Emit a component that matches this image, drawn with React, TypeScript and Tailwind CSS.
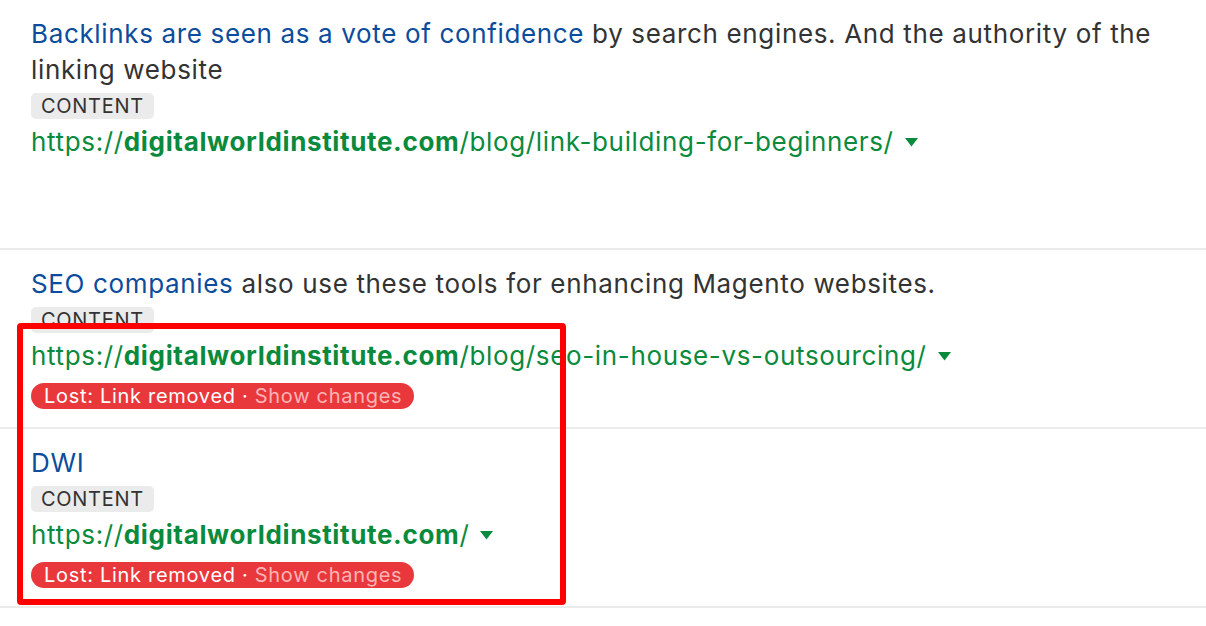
import React from 'react'

interface Backlink {
  anchor: string
  rest?: string
  path: string
  lost?: boolean
}

const rows: Backlink[] = [
  {
    anchor: 'Backlinks are seen as a vote of confidence',
    rest: ' by search engines. And the authority of the linking website',
    path: 'blog/link-building-for-beginners/',
  },
  {
    anchor: 'SEO companies',
    rest: ' also use these tools for enhancing Magento websites.',
    path: 'blog/seo-in-house-vs-outsourcing/',
    lost: true,
  },
  {
    anchor: 'DWI',
    path: '',
    lost: true,
  },
]

function Caret() {
  return (
    <svg width="15" height="10" viewBox="0 0 15 10" className="ml-[10px] inline-block align-middle">
      <path d="M1 1 L14 1 L7.5 9.5 Z" fill="#0a8a3d" />
    </svg>
  )
}

function Row({ item, first }: { item: Backlink; first?: boolean }) {
  return (
    <div
      className={
        'border-b-2 border-[#ebebeb] pl-[31px] pr-6 pt-4 pb-[13px] ' + (first ? 'h-[250px]' : '')
      }
    >
      <p className="text-[26px] leading-9 tracking-[0.65px] text-[#333333] max-w-[1150px]">
        <span className="text-[#0b4c9c]">{item.anchor}</span>
        {item.rest}
      </p>
      <div className="h-9 flex items-center">
        <span className="rounded-[5px] bg-[#ebebeb] px-[10px] text-[20px] leading-[26px] tracking-[0.7px] text-[#333333]">
          CONTENT
        </span>
      </div>
      <div className="h-9 flex items-center text-[26px] leading-9 tracking-[0.65px] text-[#0a8a3d]">
        <span>
          https://<span className="font-bold">digitalworldinstitute.com</span>/{item.path}
        </span>
        <Caret />
      </div>
      {item.lost && (
        <div className="mt-1 h-9 flex items-center">
          <span className="rounded-full bg-[#e8383c] pl-[13px] pr-3 text-[20px] leading-[26px] tracking-[0.7px] text-white">
            Lost: Link removed · <span className="text-[#ffb4b4]">Show changes</span>
          </span>
        </div>
      )}
    </div>
  )
}

export default function App() {
  return (
    <div
      className="relative w-[1206px] h-[626px] overflow-hidden bg-white"
      style={{ fontFamily: 'Inter, "Noto Sans", sans-serif' }}
    >
      {rows.map((r, i) => (
        <Row key={i} item={r} first={i === 0} />
      ))}
      <div className="pointer-events-none absolute left-[17px] top-[323px] h-[282px] w-[549px] rounded-[4px] border-[6px] border-[#ff0000]" />
    </div>
  )
}
